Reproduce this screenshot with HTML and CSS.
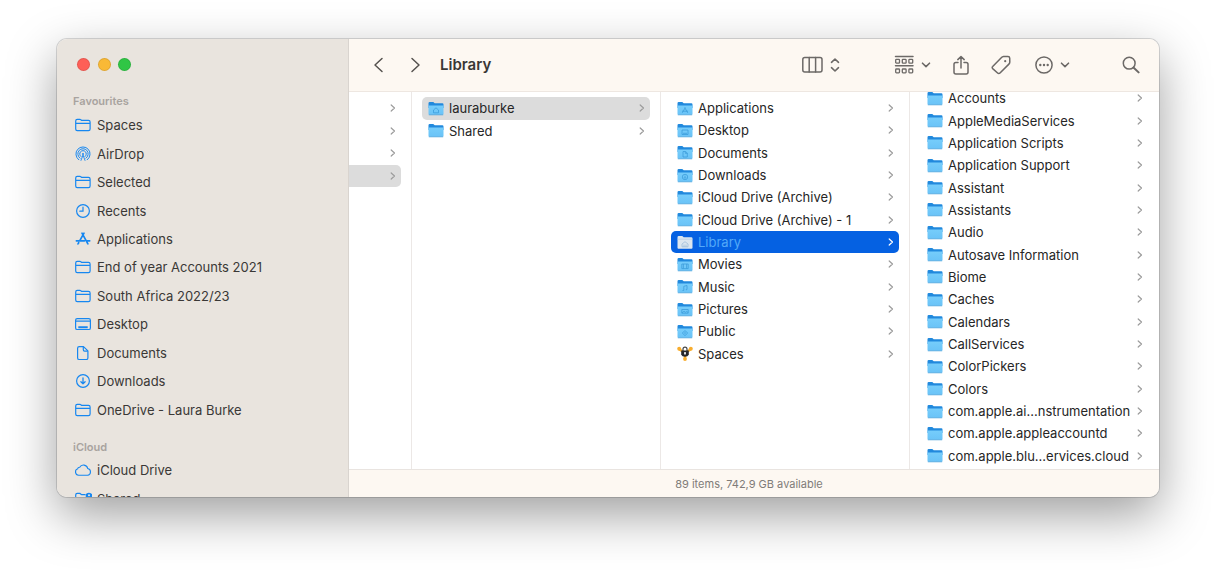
FILE: index.html
```html
<!DOCTYPE html>
<html lang="en">
<head>
<meta charset="utf-8">
<title>Library</title>
<link rel="stylesheet" href="styles.css">
</head>
<body>
<svg class="defs" aria-hidden="true">
  <defs>
    <linearGradient id="fg" x1="0" y1="0" x2="0" y2="1"><stop offset="0" stop-color="#76cdfb"/><stop offset="1" stop-color="#6ac3f7"/></linearGradient>
    <symbol id="folder" viewBox="0 0 16 15">
      <path d="M.5 2.2Q.5 1 1.700 1h3.600l1.400 1.300h7.600q1.200 0 1.200 1.200V7H.5z" fill="#2189dd"/>
      <path d="M.5 4.400h15v8.400q0 1-1 1h-13q-1 0-1-1z" fill="url(#fg)"/>
      <path d="M.8 13.800h14.400" stroke="#4ba3dc" stroke-width=".8"/>
    </symbol>
    <symbol id="chev" viewBox="0 0 6 8"><path d="M1.200 1 4.500 4 1.200 7" fill="none" stroke="currentColor" stroke-width="1.200" stroke-linecap="round" stroke-linejoin="round"/></symbol>
    <symbol id="down" viewBox="0 0 10 6"><path d="M1.500 1.200 5 4.600l3.500-3.400" fill="none" stroke="currentColor" stroke-width="1.600" stroke-linecap="round" stroke-linejoin="round"/></symbol>
    <symbol id="s-folder" viewBox="0 0 18 16"><path d="M1.700 12V4q0-1.600 1.600-1.600h2.600q.6 0 1 .4l.7.6h6.900q1.600 0 1.600 1.600v7q0 1.600-1.600 1.600H3.300q-1.600 0-1.600-1.600zM1.700 6.300h14.400" fill="none" stroke="currentColor" stroke-width="1.200"/></symbol>
  </defs>
</svg>
<main class="window">
  <aside class="sidebar">
    <div class="lights">
      <button class="light close" aria-label="Close"></button>
      <button class="light minimise" aria-label="Minimise"></button>
      <button class="light zoom" aria-label="Zoom"></button>
    </div>
    <h2 class="section">Favourites</h2>
    <ul class="places favourites">
      <li><a href="#"><svg><use href="#s-folder"/></svg>Spaces</a></li>
      <li><a href="#"><svg viewBox="0 0 18 16" fill="none" stroke="currentColor" stroke-width="1" stroke-linecap="round"><path d="M4.800 13.800a7.100 7.100 0 1 1 8.400 0M6 12.200a5.200 5.200 0 1 1 6 0M7 10.600a3.300 3.300 0 1 1 4 0"/><path d="M7 14.400 9 9l2 5.400" stroke-width=".9"/><circle cx="9" cy="8" r="1" fill="currentColor" stroke="none"/></svg>AirDrop</a></li>
      <li><a href="#"><svg><use href="#s-folder"/></svg>Selected</a></li>
      <li><a href="#"><svg viewBox="0 0 18 16" fill="none" stroke="currentColor" stroke-width="1.200" stroke-linecap="round"><circle cx="9" cy="8" r="6.400"/><path d="M9 4v4.200H5.800"/></svg>Recents</a></li>
      <li><a href="#"><svg viewBox="0 0 18 16" fill="none" stroke="currentColor" stroke-width="1.700" stroke-linecap="round"><path d="M8 2.200l5.900 10.600M10 2.200 5.800 9.700M4.700 11.700l-.7 1.200M2.400 9.800h8M13 9.800h2.700"/></svg>Applications</a></li>
      <li><a href="#"><svg><use href="#s-folder"/></svg>End of year Accounts 2021</a></li>
      <li><a href="#"><svg><use href="#s-folder"/></svg>South Africa 2022/23</a></li>
      <li><a href="#"><svg viewBox="0 0 18 16" fill="none" stroke="currentColor" stroke-width="1.200"><rect x="1.600" y="2.600" width="14.800" height="10.900" rx="1.600"/><path d="M1.600 5.100h14.800"/><path d="M4.300 11.200h9.400" stroke-width="2"/></svg>Desktop</a></li>
      <li><a href="#"><svg viewBox="0 0 18 16" fill="none" stroke="currentColor" stroke-width="1.200" stroke-linejoin="round"><path d="M5.200 1.600h4.300l4.400 4.300v7q0 1.600-1.600 1.600H5.200q-1.600 0-1.600-1.600V3.200q0-1.600 1.600-1.600z"/><path d="M9.300 1.800v3q0 1.300 1.300 1.300h3.100"/></svg>Documents</a></li>
      <li><a href="#"><svg viewBox="0 0 18 16" fill="none" stroke="currentColor" stroke-width="1.200" stroke-linecap="round" stroke-linejoin="round"><circle cx="9" cy="8" r="6.400"/><path d="M9 4.800v6M6.900 8.800 9 10.900l2.100-2.100" stroke-width="1.300"/></svg>Downloads</a></li>
      <li><a href="#"><svg><use href="#s-folder"/></svg>OneDrive - Laura Burke</a></li>
    </ul>
    <h2 class="section">iCloud</h2>
    <ul class="places cloud">
      <li><a href="#"><svg viewBox="0 0 18 16" fill="none" stroke="currentColor" stroke-width="1.100"><path d="M4.600 13.200a3.300 3.300 0 0 1-.9-6.400q.2-1.600 2-1.500A4.300 4.300 0 0 1 13.700 6.500 3.400 3.400 0 0 1 13.600 13.200z"/></svg>iCloud Drive</a></li>
      <li><a href="#"><svg viewBox="0 0 18 16" fill="none" stroke="currentColor" stroke-width="1.200"><path d="M10 13.600H3.300q-1.600 0-1.600-1.600V4q0-1.600 1.600-1.600h2.600l1.700 1.300h4M1.700 6.500h9"/><circle cx="15" cy="5" r="3.300" fill="currentColor" stroke="none"/><circle cx="15" cy="4.300" r="1" fill="#e9e4de" stroke="none"/><path d="M11 14q0-4 4-4t3 4" fill="currentColor"/></svg>Shared</a></li>
    </ul>
  </aside>
  <section class="browser">
    <header class="toolbar">
      <nav class="history">
        <button aria-label="Back"><svg width="11" height="16" viewBox="0 0 11 16"><path d="M9 1.500 2 8l7 6.500"/></svg></button>
        <button aria-label="Forward"><svg width="11" height="16" viewBox="0 0 11 16"><path d="M2 1.500 9 8l-7 6.500"/></svg></button>
      </nav>
      <h1>Library</h1>
      <div class="tools">
        <button class="view" aria-label="View as columns">
          <svg width="21" height="18" viewBox="0 0 21 18"><rect x=".8" y="1.600" width="19.200" height="14.500" rx="2"/><path d="M7.200 1.600v14.500M13.600 1.600v14.500"/></svg>
          <svg width="10" height="16" viewBox="0 0 10 16"><path d="M1.500 5.300 5 2l3.500 3.300M1.500 10.700 5 14l3.500-3.300" stroke-width="1.600"/></svg>
        </button>
        <button class="group" aria-label="Group items">
          <svg width="21" height="20" viewBox="0 0 21 20"><path d="M1.500 1.500h17.500M1.500 10.800h17.500"/><g stroke-width="1.300"><rect x="1.700" y="4.300" width="3.800" height="3.800" rx=".7"/><rect x="8.300" y="4.300" width="3.800" height="3.800" rx=".7"/><rect x="14.900" y="4.300" width="3.800" height="3.800" rx=".7"/><rect x="1.700" y="14" width="3.800" height="3.800" rx=".7"/><rect x="8.300" y="14" width="3.800" height="3.800" rx=".7"/><rect x="14.900" y="14" width="3.800" height="3.800" rx=".7"/></g></svg>
          <svg width="10" height="6"><use href="#down"/></svg>
        </button>
        <button class="share" aria-label="Share"><svg width="18" height="21" viewBox="0 0 18 21"><path d="M6 7.500H3.800Q2 7.500 2 9.300v8Q2 19 3.800 19h10.400q1.800 0 1.800-1.700v-8q0-1.800-1.800-1.800H12M9 13V1.500M5.800 4.600 9 1.500l3.200 3.100"/></svg></button>
        <button class="tag" aria-label="Edit tags"><svg width="20" height="20" viewBox="0 0 20 20"><path d="M1.700 11.500 10.500 2.500Q11.300 1.600 12.500 1.500l4.500-.1q1.600 0 1.700 1.600l.1 4q0 1.200-.9 2.100L9 18q-1.200 1.200-2.400 0l-4.900-4.400q-1.100-1.100 0-2.100z"/><circle cx="14.200" cy="6.200" r="1.100" fill="currentColor" stroke="none"/></svg></button>
        <button class="more" aria-label="More actions">
          <svg width="18" height="18" viewBox="0 0 18 18"><circle cx="9" cy="9" r="8.100"/><g fill="currentColor" stroke="none"><circle cx="5.300" cy="9" r="1.200"/><circle cx="9" cy="9" r="1.200"/><circle cx="12.700" cy="9" r="1.200"/></g></svg>
          <svg width="10" height="6"><use href="#down"/></svg>
        </button>
        <button class="search" aria-label="Search"><svg width="18" height="18" viewBox="0 0 18 18"><circle cx="7.200" cy="7.200" r="5.900"/><path d="m11.700 11.700 4.900 4.700" stroke-width="2"/></svg></button>
      </div>
    </header>
    <div class="columns">
      <div class="column">
        <ul class="list first">
          <li><a href="#" aria-label="Folder 1"><svg class="chev"><use href="#chev"/></svg></a></li>
          <li><a href="#" aria-label="Folder 2"><svg class="chev"><use href="#chev"/></svg></a></li>
          <li><a href="#" aria-label="Folder 3"><svg class="chev"><use href="#chev"/></svg></a></li>
          <li><a href="#" class="path" aria-label="Users"><svg class="chev"><use href="#chev"/></svg></a></li>
        </ul>
      </div>
      <div class="column">
        <ul class="list users">
          <li><a href="#" class="path"><svg class="icon" viewBox="0 0 16 15"><use href="#folder"/><path d="M5.500 9 8 6.800 10.500 9v2.800h-5z" class="mark"/></svg><span>lauraburke</span><svg class="chev"><use href="#chev"/></svg></a></li>
          <li><a href="#"><svg class="icon"><use href="#folder"/></svg><span>Shared</span><svg class="chev"><use href="#chev"/></svg></a></li>
        </ul>
      </div>
      <div class="column">
        <ul class="list home">
          <li><a href="#"><svg class="icon" viewBox="0 0 16 15"><use href="#folder"/><path d="M5.300 11.800 8.300 6.500M7.700 6.500l3 5.300M5 10.200h6" class="mark"/></svg><span>Applications</span><svg class="chev"><use href="#chev"/></svg></a></li>
          <li><a href="#"><svg class="icon" viewBox="0 0 16 15"><use href="#folder"/><path d="M5 7h6v4.500H5zM6 10.300h4" class="mark"/></svg><span>Desktop</span><svg class="chev"><use href="#chev"/></svg></a></li>
          <li><a href="#"><svg class="icon" viewBox="0 0 16 15"><use href="#folder"/><path d="M6 6.500h2.500L10.300 8v4H6zM8.300 6.500V8.300h2" class="mark"/></svg><span>Documents</span><svg class="chev"><use href="#chev"/></svg></a></li>
          <li><a href="#"><svg class="icon" viewBox="0 0 16 15"><use href="#folder"/><path d="M10.700 9a2.700 2.700 0 1 1-5.400 0 2.700 2.700 0 0 1 5.400 0M8 7.600v2.600M7 9.400l1 1 1-1" class="mark"/></svg><span>Downloads</span><svg class="chev"><use href="#chev"/></svg></a></li>
          <li><a href="#"><svg class="icon"><use href="#folder"/></svg><span>iCloud Drive (Archive)</span><svg class="chev"><use href="#chev"/></svg></a></li>
          <li><a href="#"><svg class="icon"><use href="#folder"/></svg><span>iCloud Drive (Archive) - 1</span><svg class="chev"><use href="#chev"/></svg></a></li>
          <li><a href="#" class="selected" aria-current="true"><svg class="icon" viewBox="0 0 16 15"><path d="M.5 2.200Q.5 1 1.700 1h3.600l1.400 1.300h7.600q1.200 0 1.200 1.200v9.300q0 1-1 1h-13q-1 0-1-1z" fill="#dce6ef"/><path d="M.5 4.200h15" stroke="#a9c8e8" stroke-width=".6"/><path d="M5 11.800V9l3-2.300L11 9v2.800zM7 11.800V9.500M9 11.800V9.500" fill="none" stroke="#9dbcd9" stroke-width=".8"/></svg><span>Library</span><svg class="chev"><use href="#chev"/></svg></a></li>
          <li><a href="#"><svg class="icon" viewBox="0 0 16 15"><use href="#folder"/><path d="M4.800 7h6.400v4.600H4.800zM6.400 7v4.600M9.600 7v4.600" class="mark"/></svg><span>Movies</span><svg class="chev"><use href="#chev"/></svg></a></li>
          <li><a href="#"><svg class="icon" viewBox="0 0 16 15"><use href="#folder"/><path d="M6.800 11.300V7.300l3.200-.8v4M5.500 11.500h1.300M8.800 10.700H10" class="mark"/></svg><span>Music</span><svg class="chev"><use href="#chev"/></svg></a></li>
          <li><a href="#"><svg class="icon" viewBox="0 0 16 15"><use href="#folder"/><path d="M4.800 7.500h6.400v3.700H4.800zM5 10.800l2-1.500 1.500 1 1.200-.8 1.300 1" class="mark"/></svg><span>Pictures</span><svg class="chev"><use href="#chev"/></svg></a></li>
          <li><a href="#"><svg class="icon" viewBox="0 0 16 15"><use href="#folder"/><path d="M8 6.600 10.700 9 8 11.600 5.300 9zM8 8v2" class="mark"/></svg><span>Public</span><svg class="chev"><use href="#chev"/></svg></a></li>
          <li><a href="#"><svg class="icon" viewBox="0 0 16 15"><path d="M2 3 8 7.200 14 3M8 7v6" stroke="#f8ad2e" stroke-width="2.400" fill="none"/><g fill="#f8ad2e"><circle cx="2.200" cy="2.800" r="2"/><circle cx="13.800" cy="2.800" r="2"/><circle cx="8" cy="13" r="1.900"/></g><path d="M6 5V3.200q0-2 2-2t2 2V5" fill="none" stroke="#444" stroke-width="1.200"/><path d="M4.200 4.500h7.600v4.200Q10.800 10.800 8 10.800T4.200 8.700z" fill="#26262a"/><circle cx="8" cy="7" r="1" fill="#fff"/><path d="M8 7v2" stroke="#fff" stroke-width=".8"/></svg><span>Spaces</span><svg class="chev"><use href="#chev"/></svg></a></li>
        </ul>
      </div>
      <div class="column">
        <ul class="list library">
          <li><a href="#"><svg class="icon"><use href="#folder"/></svg><span>Accounts</span><svg class="chev"><use href="#chev"/></svg></a></li>
          <li><a href="#"><svg class="icon"><use href="#folder"/></svg><span>AppleMediaServices</span><svg class="chev"><use href="#chev"/></svg></a></li>
          <li><a href="#"><svg class="icon"><use href="#folder"/></svg><span>Application Scripts</span><svg class="chev"><use href="#chev"/></svg></a></li>
          <li><a href="#"><svg class="icon"><use href="#folder"/></svg><span>Application Support</span><svg class="chev"><use href="#chev"/></svg></a></li>
          <li><a href="#"><svg class="icon"><use href="#folder"/></svg><span>Assistant</span><svg class="chev"><use href="#chev"/></svg></a></li>
          <li><a href="#"><svg class="icon"><use href="#folder"/></svg><span>Assistants</span><svg class="chev"><use href="#chev"/></svg></a></li>
          <li><a href="#"><svg class="icon"><use href="#folder"/></svg><span>Audio</span><svg class="chev"><use href="#chev"/></svg></a></li>
          <li><a href="#"><svg class="icon"><use href="#folder"/></svg><span>Autosave Information</span><svg class="chev"><use href="#chev"/></svg></a></li>
          <li><a href="#"><svg class="icon"><use href="#folder"/></svg><span>Biome</span><svg class="chev"><use href="#chev"/></svg></a></li>
          <li><a href="#"><svg class="icon"><use href="#folder"/></svg><span>Caches</span><svg class="chev"><use href="#chev"/></svg></a></li>
          <li><a href="#"><svg class="icon"><use href="#folder"/></svg><span>Calendars</span><svg class="chev"><use href="#chev"/></svg></a></li>
          <li><a href="#"><svg class="icon"><use href="#folder"/></svg><span>CallServices</span><svg class="chev"><use href="#chev"/></svg></a></li>
          <li><a href="#"><svg class="icon"><use href="#folder"/></svg><span>ColorPickers</span><svg class="chev"><use href="#chev"/></svg></a></li>
          <li><a href="#"><svg class="icon"><use href="#folder"/></svg><span>Colors</span><svg class="chev"><use href="#chev"/></svg></a></li>
          <li><a href="#"><svg class="icon"><use href="#folder"/></svg><span>com.apple.ai...nstrumentation</span><svg class="chev"><use href="#chev"/></svg></a></li>
          <li><a href="#"><svg class="icon"><use href="#folder"/></svg><span>com.apple.appleaccountd</span><svg class="chev"><use href="#chev"/></svg></a></li>
          <li><a href="#"><svg class="icon"><use href="#folder"/></svg><span>com.apple.blu...ervices.cloud</span><svg class="chev"><use href="#chev"/></svg></a></li>
        </ul>
      </div>
    </div>
    <footer class="status">89 items, 742,9 GB available</footer>
  </section>
</main>
</body>
</html>
```
FILE: styles.css
```css
* { box-sizing: border-box; }
body {
  margin: 0;
  min-height: 100vh;
  display: grid;
  padding: 39px 57px 76px;
  background: #fff;
  font-family: Inter, "Liberation Sans", sans-serif;
  font-size: 13px;
  line-height: 16px;
  color: #262626;
}
.defs { position: absolute; width: 0; height: 0; }
ul { list-style: none; margin: 0; padding: 0; }
h1, h2 { margin: 0; }
a { color: inherit; text-decoration: none; }
button {
  display: flex;
  align-items: center;
  justify-content: space-between;
  border: 0;
  padding: 0;
  background: none;
  color: #6c6967;
}

.window {
  display: grid;
  grid-template-columns: 292px 1fr;
  grid-template-rows: minmax(0, 1fr);
  overflow: hidden;
  border-radius: 10px;
  background: #fff;
  box-shadow: 0 0 0 1px rgba(0, 0, 0, .14), 0 18px 50px rgba(0, 0, 0, .38);
}

.sidebar {
  height: 0;
  min-height: 100%;
  overflow: hidden;
  padding: 19px 16px 0;
  background: #e9e4de;
  border-right: 1px solid #d9d4cf;
}
.lights {
  display: flex;
  justify-content: space-between;
  width: 54px;
  margin: 0 4px 22px;
}
.light {
  width: 13px;
  height: 13px;
  border-radius: 50%;
  box-shadow: inset 0 0 0 1px rgba(0, 0, 0, .1);
}
.close { background: #fe5f57; }
.minimise { background: #f9b936; }
.zoom { background: #30c645; }
.section {
  font-size: 11px;
  font-weight: 600;
  color: #a8a39f;
}
.places {
  display: grid;
  grid-auto-rows: 1fr;
}
.places a {
  display: flex;
  align-items: center;
  gap: 5px;
  height: 100%;
  color: #3a3836;
}
.places svg {
  width: 18px;
  height: 16px;
  margin-left: 1px;
  color: #1787f0;
}
.favourites { height: 313px; margin: 2px 0 15px; }
.cloud { height: 57px; margin-top: 1px; }

.browser {
  display: flex;
  flex-direction: column;
  min-width: 0;
}
.toolbar {
  display: flex;
  align-items: center;
  height: 53px;
  padding: 0 19px 0 24px;
  background: #fdf8f2;
  border-bottom: 1px solid #eee7e1;
}
.toolbar svg {
  fill: none;
  stroke: currentColor;
  stroke-width: 1.5px;
  stroke-linecap: round;
  stroke-linejoin: round;
}
.history { display: flex; gap: 26px; }
.history button { color: #55524f; }
.toolbar h1 {
  flex: 1;
  margin-left: 19px;
  font-size: 15px;
  line-height: 20px;
  font-weight: 600;
  color: #3a3735;
}
.tools { display: flex; align-items: center; }
.view { width: 38px; margin-right: 54px; }
.group { width: 37px; margin-right: 21px; }
.share { margin-right: 21px; }
.tag { margin-right: 24px; }
.more { width: 35px; margin-right: 52px; }

.columns {
  flex: 1;
  display: grid;
  grid-template-columns: 63px repeat(3, minmax(0, 1fr));
  overflow: hidden;
}
.column {
  padding: 5px 10px 0;
  border-right: 1px solid #ece8e6;
}
.column:first-child { padding-left: 0; }
.column:last-child { border-right: 0; padding: 0 11px; }
.list {
  display: grid;
  grid-auto-rows: 1fr;
}
.list a {
  display: flex;
  align-items: center;
  gap: 5px;
  height: 100%;
  padding: 0 5px 0 6px;
  border-radius: 5px;
}
.list span { flex: 1; white-space: nowrap; }
.icon { width: 16px; height: 15px; flex: none; }
.mark { fill: none; stroke: #3c9ddb; stroke-width: .8px; }
.chev { width: 6px; height: 8px; flex: none; color: #9c9c9c; }
.first { height: 90px; }
.list.first a { justify-content: flex-end; border-radius: 0 5px 5px 0; }
.users { height: 45px; }
.home { height: 268px; }
/* scrolled slightly, so the first row sits partly under the toolbar */
.library { height: 380px; margin-top: -5px; }
.path { background: #dcdcdc; }
.list .selected { background: #0561e2; color: #53a9f8; }
.selected .chev { color: #fff; }

.status {
  display: flex;
  align-items: center;
  justify-content: center;
  height: 28px;
  padding-right: 10px;
  border-top: 1px solid #e9e4e0;
  background: #fdf8f2;
  font-size: 11px;
  color: #807c79;
}
```
